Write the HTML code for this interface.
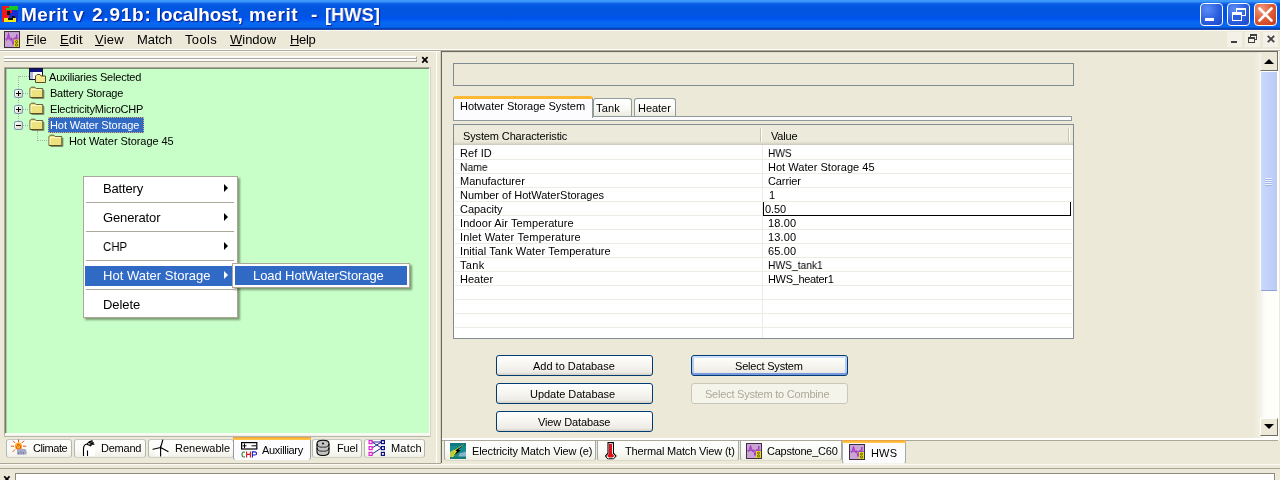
<!DOCTYPE html>
<html>
<head>
<meta charset="utf-8">
<title>Merit</title>
<style>
html,body{margin:0;padding:0;}
body{width:1280px;height:480px;overflow:hidden;background:#ece9d8;font-family:"Liberation Sans",sans-serif;font-size:11px;color:#000;position:relative;}
.a{position:absolute;}
.t{position:absolute;white-space:nowrap;line-height:16px;will-change:transform;}
#title{left:0;top:0;width:1280px;height:30px;background:linear-gradient(to bottom,#3f9dff 0px,#3a94f9 1.5px,#1a6ce8 3px,#0559e3 4.5px,#0055e0 10px,#0054e2 16px,#0053f4 19px,#0461f1 21px,#0868f2 23px,#0665ef 27px,#0446c2 28.3px,#002f9c 29.3px,#6f8fcf 30px);}
.tb{position:absolute;top:3px;width:23px;height:23px;border:1px solid #fff;border-radius:4px;box-sizing:border-box;background:radial-gradient(circle at 30% 25%,#5b8df5 0%,#2b5fe0 55%,#1c46c4 100%);}
.tb.close{background:radial-gradient(circle at 30% 25%,#f09a7c 0%,#de5a34 50%,#c2391a 100%);}
u{text-decoration:underline;}
.ctx{background:#fff;border:1px solid #aca899;box-shadow:2px 2px 2px rgba(30,40,10,0.45);box-sizing:border-box;}
.sep{position:absolute;height:1px;background:#aca899;}
.arr{position:absolute;width:0;height:0;border-left:4px solid #000;border-top:4px solid transparent;border-bottom:4px solid transparent;}
.tab{position:absolute;box-sizing:border-box;border:1px solid #919b9c;border-bottom:none;border-radius:3px 3px 0 0;background:linear-gradient(to bottom,#fff 0%,#f9f9f5 60%,#ebeade 100%);}
.btab{position:absolute;box-sizing:border-box;border:1px solid #a3aaa8;border-top:none;border-bottom-color:#dcd9ca;border-radius:0 0 3px 3px;background:linear-gradient(to bottom,#fefefd 0%,#fafaf6 55%,#efeee3 100%);}
.btn{position:absolute;box-sizing:border-box;border:1px solid #003c74;border-radius:3px;background:linear-gradient(to bottom,#fff 0%,#f6f5f0 50%,#ecebe5 85%,#d6d0c5 100%);}
.ltab{position:absolute;top:439px;height:19px;box-sizing:border-box;border:1px solid #b4b9b0;border-top-color:#c4c8c0;border-bottom-color:#d0d0c4;border-radius:3px;background:linear-gradient(to bottom,#fefefd 0%,#fafaf6 60%,#f1f0e7 100%);}
.rl{position:absolute;left:455px;width:617px;height:1px;background:#ecebe4;}
.exp{position:absolute;width:9px;height:9px;box-sizing:border-box;border:1px solid #7898b5;border-radius:2px;background:linear-gradient(135deg,#fff,#d6d2c2);}
.exp i{position:absolute;left:1px;top:3px;width:5px;height:1px;background:#000;}
.exp b{position:absolute;left:3px;top:1px;width:1px;height:5px;background:#000;}
.dh{position:absolute;height:1px;border-top:1px dotted #a4b6a4;}
.dv{position:absolute;width:1px;border-left:1px dotted #a4b6a4;}
</style>
</head>
<body>

<div id="title" class="a">
  <svg class="a" style="left:2px;top:6px" width="16" height="16" viewBox="0 0 16 16">
    <rect x="0" y="0" width="16" height="16" fill="#1830d0"/>
    <rect x="0" y="0" width="7" height="13" fill="#f01818"/>
    <rect x="4" y="0" width="12" height="4" fill="#18c828"/><rect x="4" y="0" width="3" height="2" fill="#f01818"/>
    <rect x="7" y="4" width="3" height="3" fill="#f01818"/>
    <rect x="5" y="5" width="3" height="4" fill="#101018"/>
    <rect x="2" y="12" width="12" height="4" fill="#f4ec18"/><rect x="0" y="13" width="2" height="3" fill="#f01818"/>
    <rect x="6" y="12" width="5" height="2" fill="#101018"/><rect x="10" y="10" width="3" height="2" fill="#101018"/>
    <rect x="14" y="12" width="2" height="4" fill="#1830d0"/>
  </svg>
  <div class="t" style="left:21.4px;top:7px;font-size:19px;letter-spacing:0.45px;color:#fff;font-weight:bold;text-shadow:1px 1px 1px #0a1e8a;">Merit</div><div class="t" style="left:73.4px;top:7px;font-size:19px;color:#fff;font-weight:bold;text-shadow:1px 1px 1px #0a1e8a;">v</div><div class="t" style="left:92.2px;top:7px;font-size:19px;letter-spacing:0.78px;color:#fff;font-weight:bold;text-shadow:1px 1px 1px #0a1e8a;">2.91b:</div><div class="t" style="left:155.6px;top:7px;font-size:19px;letter-spacing:-0.21px;color:#fff;font-weight:bold;text-shadow:1px 1px 1px #0a1e8a;">localhost,</div><div class="t" style="left:249.4px;top:7px;font-size:19px;letter-spacing:0.51px;color:#fff;font-weight:bold;text-shadow:1px 1px 1px #0a1e8a;">merit</div><div class="t" style="left:311.4px;top:7px;font-size:19px;color:#fff;font-weight:bold;text-shadow:1px 1px 1px #0a1e8a;">-</div><div class="t" style="left:324.8px;top:7px;font-size:19px;transform:scaleX(0.962);transform-origin:0 0;color:#fff;font-weight:bold;text-shadow:1px 1px 1px #0a1e8a;">[HWS]</div>
  <div class="tb" style="left:1200px"><div class="a" style="left:4px;top:14px;width:9px;height:3px;background:#fff"></div></div>
  <div class="tb" style="left:1227px">
    <div class="a" style="left:8px;top:4px;width:10px;height:8px;border:1px solid #fff;border-top-width:2px;box-sizing:border-box"></div>
    <div class="a" style="left:4px;top:8px;width:10px;height:9px;border:1px solid #fff;border-top-width:3px;box-sizing:border-box;background:#2c5ce0"></div>
  </div>
  <div class="tb close" style="left:1254px">
    <svg class="a" style="left:0;top:0" width="21" height="21" viewBox="0 0 21 21"><path d="M4.5 4.5 L16.5 16.5 M16.5 4.5 L4.5 16.5" stroke="#fff" stroke-width="2.6" stroke-linecap="round"/></svg>
  </div>
</div>

<svg class="a" style="left:4px;top:31px" width="16" height="17" viewBox="0 0 16 16" preserveAspectRatio="none">
  <rect x="0.5" y="0.5" width="15" height="15" fill="#caa4d2" stroke="#3c3040"/>
  <path d="M1 7.5 H15" stroke="#8c5c9c" stroke-width="0.8"/>
  <path d="M2.5 9 L4.5 2.5 L6.5 9 M7 6 L9 12.5 L11 6 M11.5 8 L13 3 V9" fill="none" stroke="#a838c8" stroke-width="1"/>
  <path d="M4.5 2.5 V7.5 M9 7.5 V12.5" stroke="#a838c8" stroke-width="0.7"/>
  <rect x="10" y="8" width="5" height="7" fill="#e4dc20"/>
  <circle cx="12.5" cy="10" r="1" fill="none" stroke="#504800" stroke-width="0.8"/><circle cx="12.5" cy="13" r="1.1" fill="none" stroke="#504800" stroke-width="0.8"/>
</svg>
<div class="t" style="left:25.9px;top:32px;font-size:13px;letter-spacing:-0.09px;"><u>F</u>ile</div><div class="t" style="left:59.9px;top:32px;font-size:13px;letter-spacing:0.10px;"><u>E</u>dit</div><div class="t" style="left:94.9px;top:32px;font-size:13px;letter-spacing:0.25px;"><u>V</u>iew</div><div class="t" style="left:136.9px;top:32px;font-size:13px;letter-spacing:-0.05px;">Match</div><div class="t" style="left:184.9px;top:32px;font-size:13px;letter-spacing:0.34px;">Tools</div><div class="t" style="left:230.4px;top:32px;font-size:13px;letter-spacing:-0.01px;"><u>W</u>indow</div><div class="t" style="left:289.9px;top:32px;font-size:13px;letter-spacing:-0.35px;"><u>H</u>elp</div>
<div class="a" style="left:1227px;top:32px;width:15px;height:15px;background:#f3f1e8"></div>
<div class="a" style="left:1245px;top:32px;width:15px;height:15px;background:#f3f1e8"></div>
<div class="a" style="left:1263px;top:32px;width:15px;height:15px;background:#f3f1e8"></div>
<div class="a" style="left:1231px;top:41px;width:6px;height:2px;background:#404040"></div>
<div class="a" style="left:1250px;top:34px;width:7px;height:6px;border:1px solid #404040;border-top-width:2px;box-sizing:border-box"></div>
<div class="a" style="left:1248px;top:37px;width:7px;height:6px;border:1px solid #404040;border-top-width:2px;box-sizing:border-box;background:#f3f1e8"></div>
<svg class="a" style="left:1267px;top:35px" width="8" height="8" viewBox="0 0 8 8"><path d="M0.8 0.8 L7.2 7.2 M7.2 0.8 L0.8 7.2" stroke="#404040" stroke-width="1.8"/></svg>
<div class="a" style="left:0;top:49px;width:1280px;height:1px;background:#fff"></div>
<div class="a" style="left:0;top:50px;width:1280px;height:1px;background:#b0ad9c"></div>
<div class="a" style="left:0;top:51px;width:440px;height:1px;background:#fbfaf3"></div>
<div class="a" style="left:0;top:30px;width:1280px;height:1px;background:#fbfaf5"></div>

<div class="a" style="left:4px;top:56px;width:413px;height:3px;box-sizing:border-box;background:#fcfbf7;border-top:1px solid #fff;border-bottom:1px solid #aca899;border-right:1px solid #aca899"></div>
<div class="a" style="left:4px;top:59px;width:413px;height:3px;box-sizing:border-box;background:#fcfbf7;border-top:1px solid #fff;border-bottom:1px solid #aca899;border-right:1px solid #aca899"></div>
<svg class="a" style="left:421px;top:56px" width="8" height="8" viewBox="0 0 8 8"><path d="M1.2 1.2 L6.6 6.6 M6.6 1.2 L1.2 6.6" stroke="#000" stroke-width="1.7"/></svg>
<div class="a" style="left:4px;top:67px;width:426px;height:369px;box-sizing:border-box;background:#f8fbf4;border:1px solid #aca899;border-right-color:#f8fbf4;border-bottom-color:#f0f0e6"></div>
<div class="a" style="left:5px;top:68px;width:424px;height:365px;box-sizing:border-box;background:#c8ffc8;border-top:1px solid #7a8a72;border-left:1px solid #77796c"></div>
<div class="a" style="left:6px;top:69px;width:1px;height:364px;background:#a8cba4"></div>
<div class="a" style="left:4px;top:436px;width:426px;height:1px;background:#b8b6a8"></div>
<div class="dv" style="left:18px;top:76px;height:49px"></div>
<div class="dh" style="left:19px;top:76px;width:10px"></div>
<div class="dh" style="left:23px;top:93px;width:5px"></div>
<div class="dh" style="left:23px;top:109px;width:5px"></div>
<div class="dh" style="left:23px;top:125px;width:5px"></div>
<div class="dv" style="left:37px;top:131px;height:10px"></div>
<div class="dh" style="left:38px;top:140px;width:9px"></div>
<svg class="a" style="left:29px;top:68px" width="17" height="15" viewBox="0 0 17 15">
  <rect x="0.5" y="0.5" width="13" height="11" fill="#fff" stroke="#101030"/>
  <rect x="1" y="1" width="12" height="3" fill="#10107c"/>
  <rect x="1" y="4" width="3" height="7" fill="#b4b8d4"/>
  <path d="M6.5 14.5 V8 L8 6.5 H11 L12 8 H16.5 V14.5 Z" fill="#f4e890" stroke="#585020" stroke-width="1"/>
</svg>
<svg class="a" style="left:29px;top:86px" width="16" height="13" viewBox="0 0 16 13"><path d="M1 11.5 V2.6 L2.3 1.2 H5.8 L7.2 2.6 H13.8 V11.5 Z" fill="#ede27e" stroke="#5c5424" stroke-width="1"/><path d="M14.8 4 V12.3 H2.5" stroke="#48442c" stroke-width="1" fill="none" opacity="0.75"/><path d="M2 3.6 H12.8 M2 3.6 V10.5" stroke="#fffbd8" stroke-width="1" fill="none"/></svg><svg class="a" style="left:29px;top:102px" width="16" height="13" viewBox="0 0 16 13"><path d="M1 11.5 V2.6 L2.3 1.2 H5.8 L7.2 2.6 H13.8 V11.5 Z" fill="#ede27e" stroke="#5c5424" stroke-width="1"/><path d="M14.8 4 V12.3 H2.5" stroke="#48442c" stroke-width="1" fill="none" opacity="0.75"/><path d="M2 3.6 H12.8 M2 3.6 V10.5" stroke="#fffbd8" stroke-width="1" fill="none"/></svg><svg class="a" style="left:29px;top:118px" width="16" height="13" viewBox="0 0 16 13"><path d="M1 11.5 V2.6 L2.3 1.2 H5.8 L7.2 2.6 H13.8 V11.5 Z" fill="#ede27e" stroke="#5c5424" stroke-width="1"/><path d="M14.8 4 V12.3 H2.5" stroke="#48442c" stroke-width="1" fill="none" opacity="0.75"/><path d="M2 3.6 H12.8 M2 3.6 V10.5" stroke="#fffbd8" stroke-width="1" fill="none"/></svg><svg class="a" style="left:48px;top:134px" width="16" height="13" viewBox="0 0 16 13"><path d="M1 11.5 V2.6 L2.3 1.2 H5.8 L7.2 2.6 H13.8 V11.5 Z" fill="#ede27e" stroke="#5c5424" stroke-width="1"/><path d="M14.8 4 V12.3 H2.5" stroke="#48442c" stroke-width="1" fill="none" opacity="0.75"/><path d="M2 3.6 H12.8 M2 3.6 V10.5" stroke="#fffbd8" stroke-width="1" fill="none"/></svg>
<div class="exp" style="left:14px;top:89px"><i></i><b></b></div>
<div class="exp" style="left:14px;top:105px"><i></i><b></b></div>
<div class="exp" style="left:14px;top:121px"><i></i></div>
<div class="t" style="left:49.4px;top:69px;font-size:11px;letter-spacing:-0.19px;">Auxiliaries Selected</div><div class="t" style="left:50.2px;top:85px;font-size:11px;letter-spacing:-0.22px;">Battery Storage</div><div class="t" style="left:50.2px;top:101px;font-size:11px;letter-spacing:-0.21px;">ElectricityMicroCHP</div>
<div class="a" style="left:48px;top:117px;width:96px;height:16px;box-sizing:border-box;background:#316ac5;border:1px dotted #e0b060"></div>
<div class="t" style="left:50.2px;top:117px;font-size:11px;letter-spacing:-0.08px;color:#fff;">Hot Water Storage</div><div class="t" style="left:68.9px;top:133px;font-size:11px;letter-spacing:-0.07px;">Hot Water Storage 45</div>
<div class="a ctx" style="left:83px;top:176px;width:155px;height:142px"></div>
<div class="arr" style="left:224px;top:184px"></div>
<div class="sep" style="left:86px;top:202px;width:148px"></div>
<div class="arr" style="left:224px;top:213px"></div>
<div class="sep" style="left:86px;top:231px;width:148px"></div>
<div class="arr" style="left:224px;top:242px"></div>
<div class="sep" style="left:86px;top:260px;width:148px"></div>
<div class="a" style="left:85px;top:266px;width:148px;height:20px;background:#316ac5"></div>
<div class="arr" style="left:224px;top:271px;border-left-color:#fff"></div>
<div class="sep" style="left:86px;top:289px;width:148px"></div>
<div class="t" style="left:102.8px;top:181px;font-size:13px;letter-spacing:-0.15px;">Battery</div><div class="t" style="left:102.8px;top:210px;font-size:13px;letter-spacing:-0.13px;">Generator</div><div class="t" style="left:102.8px;top:239px;font-size:13px;transform:scaleX(0.874);transform-origin:0 0;">CHP</div><div class="t" style="left:102.8px;top:268px;font-size:13px;letter-spacing:0.02px;color:#fff;">Hot Water Storage</div><div class="t" style="left:102.8px;top:297px;font-size:13px;letter-spacing:-0.08px;">Delete</div>
<div class="a ctx" style="left:232px;top:263px;width:178px;height:25px;border-color:#aca899"></div>
<div class="a" style="left:235px;top:266px;width:172px;height:19px;background:#316ac5"></div>
<div class="t" style="left:252.8px;top:268px;font-size:13px;letter-spacing:-0.09px;color:#fff;">Load HotWaterStorage</div>
<div class="ltab" style="left:6px;width:66px"></div>
<div class="ltab" style="left:74px;width:72px"></div>
<div class="ltab" style="left:148px;width:86px"></div>
<div class="ltab" style="left:312px;width:50px"></div>
<div class="ltab" style="left:364px;width:61px"></div>
<div class="a" style="left:233px;top:437px;width:78px;height:23px;box-sizing:border-box;border:1px solid #919b9c;border-top:none;border-bottom:none;background:#fcfcfe;border-radius:0 0 3px 3px"></div>
<div class="a" style="left:233px;top:437px;width:78px;height:3px;background:linear-gradient(to bottom,#e0964a,#ffb838 45%,#ffc84c);border-radius:2px 2px 0 0"></div>
<div class="t" style="left:32.9px;top:440px;font-size:11px;letter-spacing:-0.43px;">Climate</div><div class="t" style="left:101.1px;top:440px;font-size:11px;letter-spacing:-0.22px;">Demand</div><div class="t" style="left:174.7px;top:440px;font-size:11px;letter-spacing:0.02px;">Renewable</div><div class="t" style="left:262.4px;top:442px;font-size:11px;letter-spacing:-0.31px;">Auxilliary</div><div class="t" style="left:337.1px;top:440px;font-size:11px;letter-spacing:-0.14px;">Fuel</div><div class="t" style="left:390.9px;top:440px;font-size:11px;letter-spacing:0.18px;">Match</div>
<div class="a" style="left:441px;top:51px;width:837px;height:1px;background:#6b695e"></div>
<div class="a" style="left:442px;top:52px;width:836px;height:1px;background:#e2dfce"></div>
<div class="a" style="left:440px;top:51px;width:1px;height:412px;background:#d5d2c0"></div>
<div class="a" style="left:441px;top:51px;width:1px;height:412px;background:#6b695e"></div>
<div class="a" style="left:436px;top:51px;width:1px;height:412px;background:#fff"></div>
<div class="a" style="left:430px;top:67px;width:1px;height:370px;background:#d6d2c6"></div>
<div class="a" style="left:0;top:463px;width:441px;height:1px;background:#aca899"></div>
<div class="a" style="left:1278px;top:51px;width:1px;height:390px;background:#fff"></div>
<!-- text field -->
<div class="a" style="left:453px;top:63px;width:621px;height:23px;box-sizing:border-box;border:1px solid #808c92;background:#ece9d8"></div>
<!-- tab control -->
<div class="a" style="left:453px;top:116px;width:619px;height:5px;box-sizing:border-box;border:1px solid #919b9c;background:#fcfcfe"></div>
<div class="tab" style="left:593px;top:98px;width:39px;height:18px"></div>
<div class="tab" style="left:634px;top:98px;width:42px;height:18px"></div>
<div class="tab" style="left:453px;top:96px;width:140px;height:22px;border-top:3px solid #ffb834;background:#fcfcfe"></div>
<div class="t" style="left:459.9px;top:98px;font-size:11px;letter-spacing:-0.01px;">Hotwater Storage System</div><div class="t" style="left:596.4px;top:100px;font-size:11px;letter-spacing:0.15px;">Tank</div><div class="t" style="left:638.2px;top:100px;font-size:11px;letter-spacing:-0.03px;">Heater</div>
<!-- table -->
<div class="a" style="left:453px;top:124px;width:621px;height:215px;box-sizing:border-box;border:1px solid #808c92;background:#fff"></div>
<div class="a" style="left:454px;top:125px;width:619px;height:20px;background:linear-gradient(to bottom,#ebeadb 0%,#ebeadb 80%,#e0dece 90%,#cbc7b8 100%)"></div>
<div class="a" style="left:760px;top:128px;width:1px;height:14px;background:#c8c5b2"></div>
<div class="a" style="left:761px;top:128px;width:1px;height:14px;background:#fff"></div>
<div class="a" style="left:1068px;top:128px;width:1px;height:14px;background:#c8c5b2"></div>
<div class="a" style="left:1069px;top:128px;width:1px;height:14px;background:#fff"></div>
<div class="a" style="left:762px;top:145px;width:1px;height:193px;background:#ecebe4"></div>
<div class="rl" style="top:159px"></div><div class="rl" style="top:173px"></div><div class="rl" style="top:187px"></div><div class="rl" style="top:201px"></div><div class="rl" style="top:215px"></div><div class="rl" style="top:229px"></div><div class="rl" style="top:243px"></div><div class="rl" style="top:257px"></div><div class="rl" style="top:271px"></div><div class="rl" style="top:285px"></div><div class="rl" style="top:299px"></div><div class="rl" style="top:313px"></div><div class="rl" style="top:327px"></div>
<div class="a" style="left:763px;top:202px;width:308px;height:14px;box-sizing:border-box;border:1px solid #000;border-top:none;background:#fff"></div>
<div class="t" style="left:463.2px;top:128px;font-size:11px;letter-spacing:-0.13px;">System Characteristic</div><div class="t" style="left:770.9px;top:128px;font-size:11px;letter-spacing:-0.16px;">Value</div><div class="t" style="left:460.0px;top:145px;font-size:11px;letter-spacing:0.12px;">Ref ID</div><div class="t" style="left:768.1px;top:145px;font-size:11px;transform:scaleX(0.923);transform-origin:0 0;">HWS</div><div class="t" style="left:460.0px;top:159px;font-size:11px;transform:scaleX(0.941);transform-origin:0 0;">Name</div><div class="t" style="left:768.1px;top:159px;font-size:11px;letter-spacing:0.03px;">Hot Water Storage 45</div><div class="t" style="left:460.0px;top:173px;font-size:11px;">Manufacturer</div><div class="t" style="left:768.1px;top:173px;font-size:11px;letter-spacing:-0.10px;">Carrier</div><div class="t" style="left:460.0px;top:187px;font-size:11px;letter-spacing:-0.02px;">Number of HotWaterStorages</div><div class="t" style="left:768.9px;top:187px;font-size:11px;">1</div><div class="t" style="left:460.0px;top:201px;font-size:11px;letter-spacing:-0.04px;">Capacity</div><div class="t" style="left:765.3px;top:201px;font-size:11px;letter-spacing:-0.11px;">0.50</div><div class="t" style="left:460.0px;top:215px;font-size:11px;letter-spacing:0.09px;">Indoor Air Temperature</div><div class="t" style="left:768.4px;top:215px;font-size:11px;letter-spacing:0.12px;">18.00</div><div class="t" style="left:460.0px;top:229px;font-size:11px;letter-spacing:0.15px;">Inlet Water Temperature</div><div class="t" style="left:768.4px;top:229px;font-size:11px;letter-spacing:0.12px;">13.00</div><div class="t" style="left:460.0px;top:243px;font-size:11px;letter-spacing:0.08px;">Initial Tank Water Temperature</div><div class="t" style="left:768.4px;top:243px;font-size:11px;letter-spacing:0.12px;">65.00</div><div class="t" style="left:460.0px;top:257px;font-size:11px;letter-spacing:0.35px;">Tank</div><div class="t" style="left:768.4px;top:257px;font-size:11px;transform:scaleX(0.934);transform-origin:0 0;">HWS_tank1</div><div class="t" style="left:460.0px;top:271px;font-size:11px;letter-spacing:0.03px;">Heater</div><div class="t" style="left:768.4px;top:271px;font-size:11px;letter-spacing:-0.33px;">HWS_heater1</div>
<div class="btn" style="left:496px;top:355px;width:157px;height:21px"></div>
<div class="btn" style="left:496px;top:383px;width:157px;height:21px"></div>
<div class="btn" style="left:496px;top:411px;width:157px;height:21px"></div>
<div class="btn" style="left:691px;top:355px;width:157px;height:21px;box-shadow:inset 0 2px 0 #cfe1fc,inset 0 -2px 0 #7a98e2,inset 2px 0 0 #b4caf4,inset -2px 0 0 #b4caf4"></div>
<div class="btn" style="left:691px;top:383px;width:157px;height:21px;border-color:#c9c7ba;background:#f5f4ea"></div>
<div class="t" style="left:533.2px;top:358px;font-size:11px;letter-spacing:-0.01px;">Add to Database</div><div class="t" style="left:530.4px;top:386px;font-size:11px;letter-spacing:-0.03px;">Update Database</div><div class="t" style="left:537.6px;top:414px;font-size:11px;letter-spacing:-0.11px;">View Database</div><div class="t" style="left:734.9px;top:358px;font-size:11px;letter-spacing:-0.20px;">Select System</div><div class="t" style="left:704.9px;top:386px;font-size:11px;letter-spacing:-0.22px;color:#aca899;">Select System to Combine</div>
<div class="a" style="left:442px;top:438px;width:836px;height:2px;background:#fff"></div>
<div class="a" style="left:442px;top:440px;width:836px;height:1px;background:#aca899"></div>
<div class="btab" style="left:444px;top:441px;width:152px;height:20px"></div>
<div class="btab" style="left:597px;top:441px;width:142px;height:20px"></div>
<div class="btab" style="left:740px;top:441px;width:102px;height:20px"></div>
<div class="btab" style="left:842px;top:440px;width:64px;height:24px;background:#fcfcfe;border-bottom-color:#f4f3ec"></div>
<div class="a" style="left:842px;top:440px;width:64px;height:3px;background:linear-gradient(to bottom,#e0964a,#ffb838 45%,#ffc84c);border-radius:2px 2px 0 0"></div>
<svg class="a" style="left:450px;top:443px" width="16" height="16" viewBox="0 0 16 16">
  <rect x="0" y="0" width="16" height="16" fill="#178a90"/><rect x="0" y="0" width="16" height="3" fill="#0f7880"/><rect x="0" y="13.5" width="16" height="2.5" fill="#147c74"/>
  <path d="M0 9 L4 6.5 L7 10 L3 14 H0 Z" fill="#b4cc48"/>
  <path d="M9.5 10.5 L16 8.5 V13.5 H8.5 Z" fill="#88b4cc"/>
  <path d="M14.5 0.8 L8 6.2 L10.4 7 L1.6 14.8 L5.6 8.6 L3.6 7.8 Z" fill="#f6f014"/>
  <path d="M13.2 2.2 L8.6 6.6 L10.6 7.4 L3.4 13 L7 8.2 L5.2 7.6 Z" fill="#000"/>
</svg>
<svg class="a" style="left:605px;top:442px" width="12" height="18" viewBox="0 0 12 18">
  <path d="M3 0.6 H8.4 V11.2 L11 14 L8.4 16.8 H3 L0.6 14 L3 11.2 Z" fill="#fff" stroke="#000" stroke-width="1.1"/>
  <path d="M4 2 H7 V11.5 L9.4 14 L7.4 15.6 H4 L2.2 14 L4 11.5 Z" fill="#e01018"/>
  <path d="M7.2 3.5 H8 M7.2 5.5 H8 M7.2 7.5 H8 M7.2 9.5 H8" stroke="#fff" stroke-width="0.9"/>
  <path d="M2 15.2 L3.6 16.4 M9.4 15.2 L7.8 16.4" stroke="#fff" stroke-width="0.8"/>
</svg>
<svg class="a" style="left:746px;top:443px" width="16" height="16" viewBox="0 0 16 16">
  <rect x="0.5" y="0.5" width="15" height="15" fill="#caa4d2" stroke="#3c3040"/>
  <path d="M1 7.5 H15" stroke="#8c5c9c" stroke-width="0.8"/>
  <path d="M2.5 9 L4.5 2.5 L6.5 9 M7 6 L9 12.5 L11 6 M11.5 8 L13 3 V9" fill="none" stroke="#a838c8" stroke-width="1"/>
  <path d="M4.5 2.5 V7.5 M9 7.5 V12.5" stroke="#a838c8" stroke-width="0.7"/>
  <rect x="10" y="8" width="5" height="7" fill="#e4dc20"/>
  <circle cx="12.5" cy="10" r="1" fill="none" stroke="#504800" stroke-width="0.8"/><circle cx="12.5" cy="13" r="1.1" fill="none" stroke="#504800" stroke-width="0.8"/>
</svg><svg class="a" style="left:849px;top:444px" width="16" height="16" viewBox="0 0 16 16">
  <rect x="0.5" y="0.5" width="15" height="15" fill="#caa4d2" stroke="#3c3040"/>
  <path d="M1 7.5 H15" stroke="#8c5c9c" stroke-width="0.8"/>
  <path d="M2.5 9 L4.5 2.5 L6.5 9 M7 6 L9 12.5 L11 6 M11.5 8 L13 3 V9" fill="none" stroke="#a838c8" stroke-width="1"/>
  <path d="M4.5 2.5 V7.5 M9 7.5 V12.5" stroke="#a838c8" stroke-width="0.7"/>
  <rect x="10" y="8" width="5" height="7" fill="#e4dc20"/>
  <circle cx="12.5" cy="10" r="1" fill="none" stroke="#504800" stroke-width="0.8"/><circle cx="12.5" cy="13" r="1.1" fill="none" stroke="#504800" stroke-width="0.8"/>
</svg><div class="t" style="left:471.6px;top:443px;font-size:11px;letter-spacing:-0.11px;">Electricity Match View (e)</div><div class="t" style="left:625.0px;top:443px;font-size:11px;letter-spacing:-0.17px;">Thermal Match View (t)</div><div class="t" style="left:767.4px;top:443px;font-size:11px;letter-spacing:-0.24px;">Capstone_C60</div><div class="t" style="left:871.4px;top:445px;font-size:11px;letter-spacing:0.16px;">HWS</div>
<div class="a" style="left:1254px;top:53px;width:24px;height:385px;background:linear-gradient(to right,#ece9d8 0%,#f3f1e6 25%,#fdfdf9 45%,#fefefb 100%)"></div>
<div class="a" style="left:1260px;top:71px;width:18px;height:220px;box-sizing:border-box;border:1px solid #fff;border-bottom-color:#8ea2d4;border-radius:2px;background:linear-gradient(to right,#c9d8fc 0%,#c1d1f9 50%,#b9caf5 100%)"></div>
<div class="a" style="left:1265px;top:178px;width:7px;height:1px;background:#eef3fe;box-shadow:0 2px 0 #eef3fe,0 4px 0 #eef3fe,0 6px 0 #eef3fe,0 1px 0 #9fb5ec,0 3px 0 #9fb5ec,0 5px 0 #9fb5ec,0 7px 0 #9fb5ec"></div>
<div class="a" style="left:1260px;top:52px;width:18px;height:19px;box-sizing:border-box;background:#ece9d8;border:1px solid #f6f4ea;border-top:none;border-right:1px solid #716f64;border-bottom:1px solid #716f64"></div>
<svg class="a" style="left:1264px;top:59px" width="10" height="5" viewBox="0 0 10 5"><path d="M0 5 L5 0 L10 5 Z" fill="#000"/></svg>
<div class="a" style="left:1260px;top:418px;width:18px;height:18px;box-sizing:border-box;background:#ece9d8;border:1px solid #fff;border-right:1px solid #716f64;border-bottom:1px solid #716f64"></div>
<svg class="a" style="left:1264px;top:424px" width="10" height="5" viewBox="0 0 10 5"><path d="M0 0 L5 5 L10 0 Z" fill="#000"/></svg>

<div class="a" style="left:0;top:464px;width:1280px;height:1px;background:#fbfaf4"></div>
<div class="a" style="left:0;top:468px;width:1280px;height:1px;background:#aca899"></div>
<svg class="a" style="left:3px;top:475px" width="8" height="8" viewBox="0 0 8 8"><path d="M1.2 1.4 L6.6 6.8 M6.6 1.4 L1.2 6.8" stroke="#000" stroke-width="1.7"/></svg>
<div class="a" style="left:15px;top:473px;width:1260px;height:12px;box-sizing:border-box;border:1px solid #8c8a7c;background:#fff"></div>

<svg class="a" style="left:10px;top:439px" width="18" height="17" viewBox="0 0 18 17">
  <g stroke="#e8501c" stroke-width="1" stroke-linecap="round"><path d="M8.5 0.8 V3 M8.5 11 V12.5 M1.2 7.2 H3.6 M13.4 7.2 H15.8 M3.2 2 L5 3.8 M13.8 2 L12 3.8 M3 12.6 L4.8 10.8"/></g>
  <circle cx="8.5" cy="7.2" r="3.6" fill="#f8b020"/>
  <path d="M8.5 7.4 a1 1 0 1 1 1 -1.2 a2.2 2.2 0 1 1 -3.2 1.6" fill="none" stroke="#e03818" stroke-width="0.9"/>
  <path d="M7 15.5 V11.5 Q8 9.5 10 10.5 Q11.5 8.8 13.5 10 Q16.5 9.5 16.5 12 V15.5 Z" fill="#a4a8c0"/>
  <path d="M8.5 15.5 V13 M11 15.5 V12.5 M13.5 15.5 V13" stroke="#7c80b0" stroke-width="1"/>
</svg>
<svg class="a" style="left:81px;top:439px" width="16" height="18" viewBox="0 0 16 18">
  <rect x="3" y="6" width="11" height="11" fill="#fff"/>
  <path d="M2.5 17 V10 Q2.5 5.5 6 5 M6.5 17 V11.5 M6 5 Q8 2 11.5 1.5 M6 5.2 L10 7 M10 7 V5.2 H13.5 M7.5 3.8 L12 2.8 M8.5 5 L13 3.8" fill="none" stroke="#000" stroke-width="1.1"/>
</svg>
<svg class="a" style="left:152px;top:439px" width="18" height="18" viewBox="0 0 18 18">
  <rect x="3" y="8" width="13" height="9" fill="#fff" opacity="0.7"/>
  <path d="M8.6 7 V17 M8.6 8.5 L10.8 1 M8.6 8.5 L1 10.3 M8.6 8.5 L16 12.6" fill="none" stroke="#000" stroke-width="1.1" stroke-linecap="round"/>
</svg>
<svg class="a" style="left:241px;top:442px" width="17" height="16" viewBox="0 0 17 16">
  <rect x="0.6" y="0.6" width="15.2" height="6.4" fill="#fff" stroke="#000" stroke-width="1.2"/>
  <path d="M1.5 3.8 H5.5 M3.5 1.5 V6 M10.5 3.8 H15" stroke="#000" stroke-width="1"/>
  <path d="M4 10.3 Q1 9.3 1 12.5 Q1 15.6 4 14.8" fill="none" stroke="#207828" stroke-width="1.1"/>
  <path d="M5.6 9.6 V15.4 M9.4 9.6 V15.4 M5.6 12.4 H9.4" fill="none" stroke="#d01818" stroke-width="1.1"/>
  <path d="M11.4 15.4 V9.9 H13.6 Q15.6 10 15.5 11.5 Q15.6 13 13.6 13 H11.4" fill="none" stroke="#1818c8" stroke-width="1.1"/>
</svg>
<svg class="a" style="left:316px;top:439px" width="14" height="18" viewBox="0 0 14 18">
  <path d="M1 4.5 V13 Q1 16.5 7 16.5 Q13 16.5 13 13 V4.5 Q13 1.2 7 1.2 Q1 1.2 1 4.5 Z" fill="#c4c4c4" stroke="#000" stroke-width="1.1"/>
  <path d="M1 5 Q1 8.3 7 8.3 Q13 8.3 13 5 M1 9 Q1 12.3 7 12.3 Q13 12.3 13 9" fill="none" stroke="#000" stroke-width="1"/>
  <path d="M2 6.5 Q7 10 12 6.5 M2 10.5 Q7 14 12 10.5" fill="none" stroke="#8c8c8c" stroke-width="1"/>
  <circle cx="7" cy="4.4" r="1" fill="#000"/>
</svg>
<svg class="a" style="left:368px;top:440px" width="18" height="16" viewBox="0 0 18 16">
  <path d="M4 2 H13.5 M4 2 L13.5 8 M4 8 L13.5 2 M4 14 L13.5 8" stroke="#101080" stroke-width="0.9" fill="none"/>
  <g fill="#fff" stroke="#e020d0" stroke-width="1.2"><rect x="1.1" y="0.6" width="3" height="3"/><rect x="1.1" y="6.6" width="3" height="3"/><rect x="1.1" y="12.4" width="3" height="3"/></g>
  <g fill="#fff" stroke="#101080" stroke-width="1.2"><rect x="13.4" y="0.6" width="3" height="3"/><rect x="13.4" y="6.6" width="3" height="3"/><rect x="13.4" y="12.4" width="3" height="3"/></g>
</svg>

</body>
</html>
